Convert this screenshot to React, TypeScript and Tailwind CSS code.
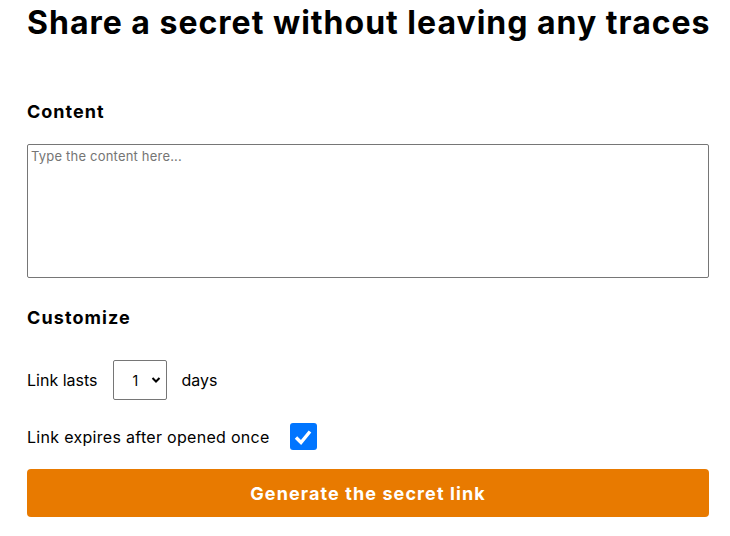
import { useState } from "react";

export default function App() {
  const [days, setDays] = useState("1");
  const [once, setOnce] = useState(true);

  return (
    <div className="min-h-[536px] bg-white pl-[27px] pr-[21px] font-['Inter',sans-serif] text-black">
      <h1 className="whitespace-nowrap pt-[3px] text-[32px] font-bold leading-[40px] tracking-[1px]">
        Share a secret without leaving any traces
      </h1>

      <h2 className="mt-[57px] text-[18px] font-bold leading-[24px] tracking-[1px]">Content</h2>
      <textarea
        placeholder="Type the content here..."
        className="mt-[20px] block h-[134px] w-full resize-none rounded-[2px] border border-[#767676] px-[3px] py-[2px] text-[13px] tracking-[0.2px] placeholder:text-[#757575] outline-none"
      />

      <h2 className="mt-[28px] text-[18px] font-bold leading-[24px] tracking-[1.1px]">Customize</h2>

      <div className="mt-[30px] flex items-center text-[16px]">
        <span>Link lasts</span>
        <div className="relative ml-[16px] h-[40px] w-[54px]">
          <select
            value={days}
            onChange={(e) => setDays(e.target.value)}
            className="h-full w-full appearance-none rounded-[2px] border border-[#767676] bg-white pl-[18px] text-[14px] outline-none"
          >
            {[1, 2, 3, 4, 5, 6, 7].map((d) => (
              <option key={d} value={d}>
                {d}
              </option>
            ))}
          </select>
          <svg
            className="pointer-events-none absolute right-[6px] top-[16px]"
            width="10"
            height="8"
            viewBox="0 0 10 8"
          >
            <path d="M1.5 2 L5 5.5 L8.5 2" fill="none" stroke="black" strokeWidth="2" />
          </svg>
        </div>
        <span className="ml-[14px]">days</span>
      </div>

      <div className="mt-[23px] flex items-center text-[16px]">
        <span className="tracking-[0.3px]">Link expires after opened once</span>
        <button
          onClick={() => setOnce(!once)}
          className={`ml-[20px] flex h-[27px] w-[27px] items-center justify-center rounded-[3px] ${
            once ? "bg-[#0075ff]" : "border border-[#767676] bg-white"
          }`}
        >
          {once && (
            <svg width="20" height="18" viewBox="0 0 20 18">
              <path d="M3 9.5 L8 14.5 L17 3.5" fill="none" stroke="white" strokeWidth="3.4" />
            </svg>
          )}
        </button>
      </div>

      <button className="mt-[19px] h-[48px] w-full rounded-[4px] bg-[#e87a00] text-[18px] font-bold tracking-[1.1px] text-white">
        Generate the secret link
      </button>
    </div>
  );
}
